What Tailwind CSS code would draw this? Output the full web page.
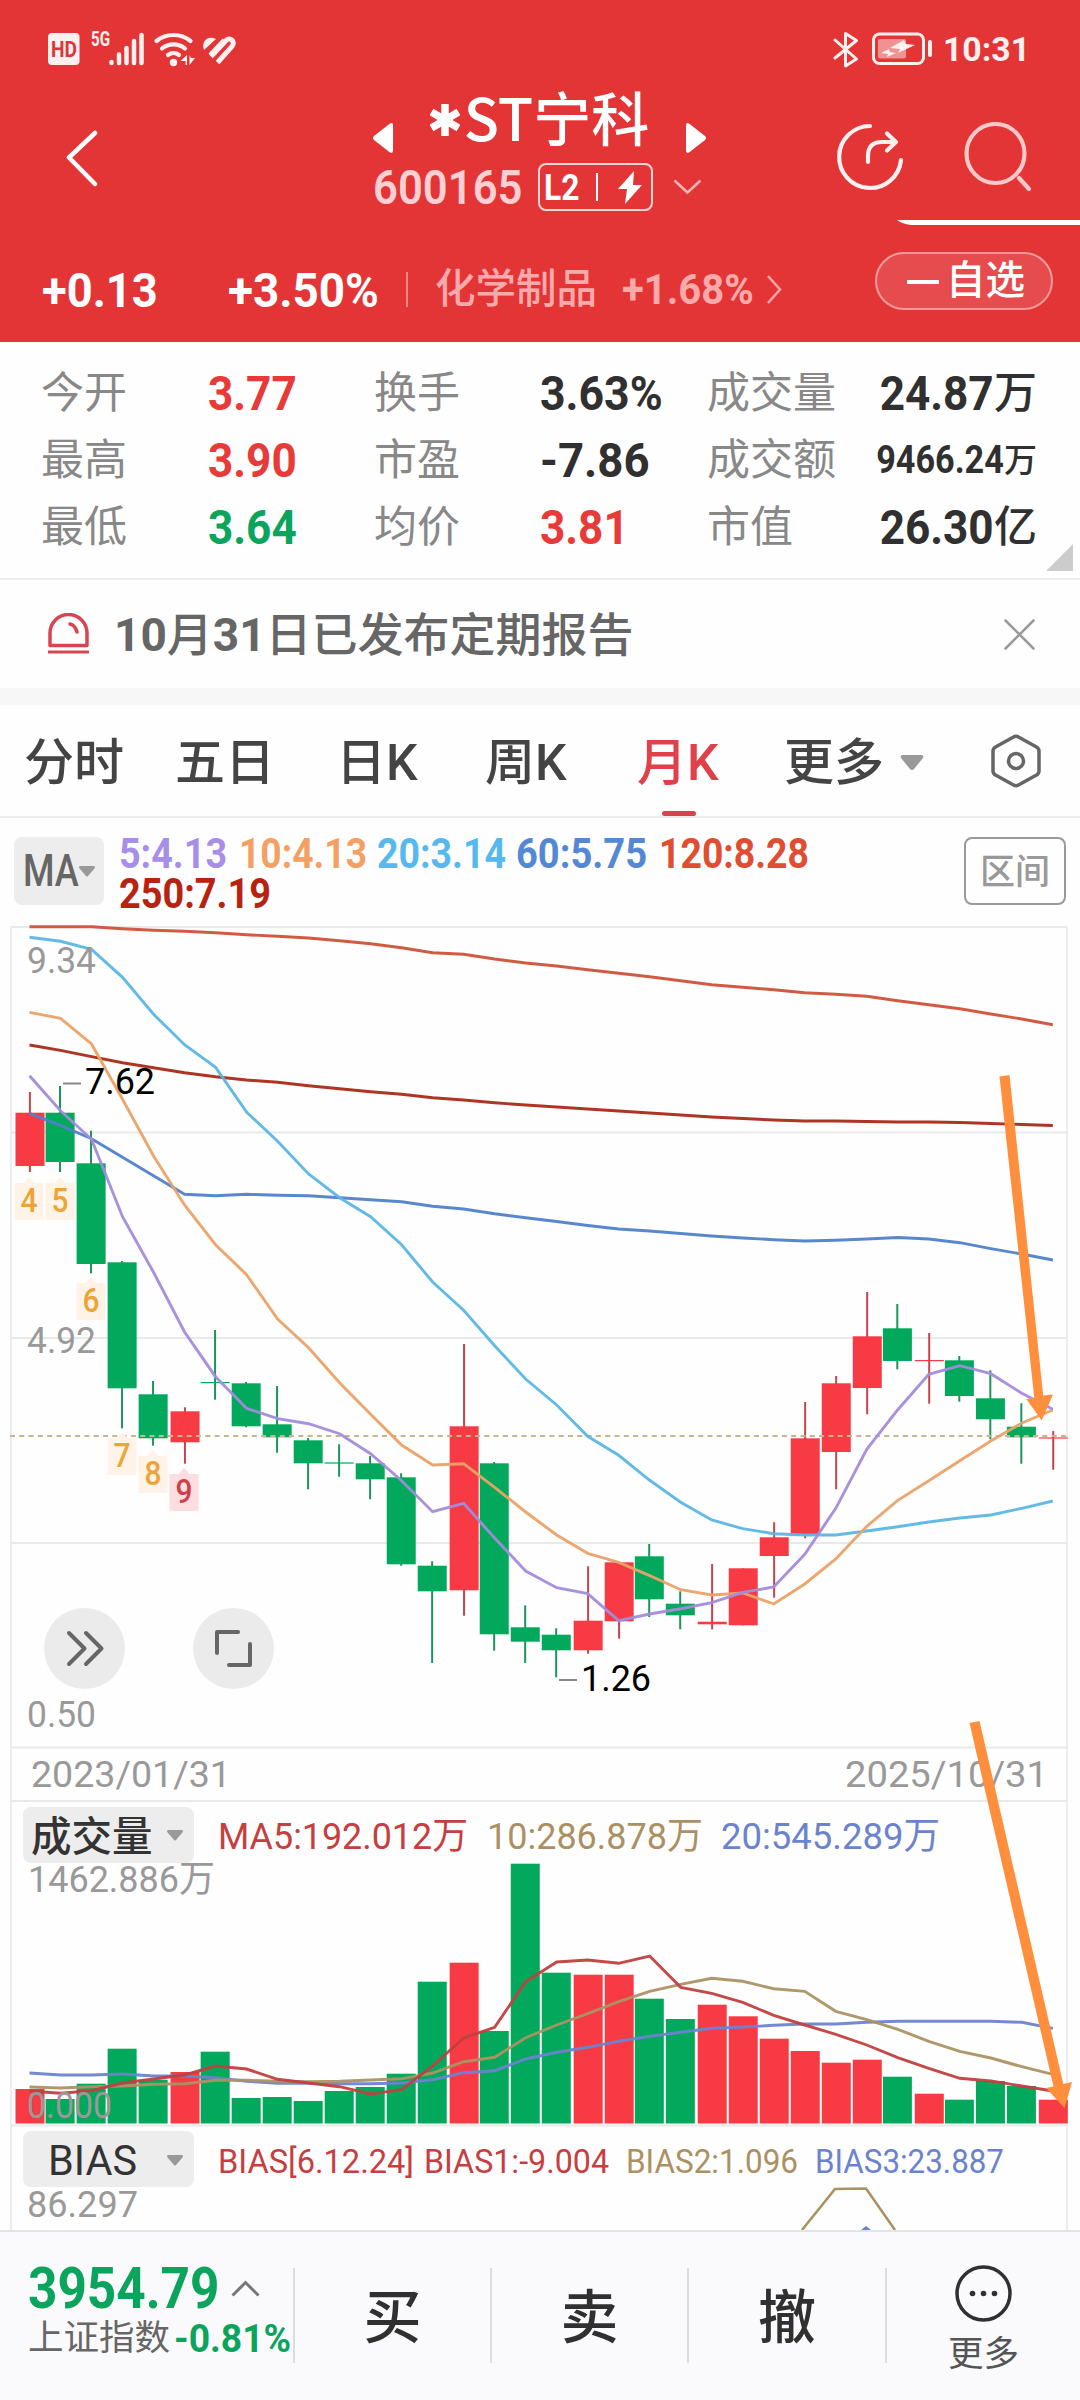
<!DOCTYPE html>
<html lang="zh-CN">
  <head>
    <meta charset="UTF-8" />
    <meta name="viewport" content="width=device-width, initial-scale=1.0" />
    <title>*ST宁科 600165</title>
    <script src="https://cdn.jsdelivr.net/npm/@tailwindcss/browser@4"></script>
  </head>
  <body
    class="w-[1080px] h-[2400px] flex flex-col overflow-hidden bg-[#fefefe] font-[Roboto,'Noto_Sans_CJK_SC',sans-serif] leading-none whitespace-nowrap"
  >
    <!-- header -->
    <header class="relative h-[342px] shrink-0 bg-[#e33536] text-white">
      <!-- status bar -->
      <div class="h-[98px] pl-12 pr-[52px] flex items-center justify-between">
        <svg class="overflow-visible" width="190" height="40" viewBox="48 29 190 40" fill="#fff0f0">
          <rect x="48" y="33" width="31.500" height="32" rx="4" />
          <text x="51" y="57" font-size="22" font-weight="700" fill="#d9393b" textLength="26" lengthAdjust="spacingAndGlyphs">HD</text>
          <text x="91" y="46" font-size="20" font-weight="700" textLength="19" lengthAdjust="spacingAndGlyphs">5G</text>
          <g stroke="#fff0f0" stroke-width="4.500" stroke-linecap="round">
            <path d="M111.500 62v1M119 54.500v8.500M126.500 48v15M134 41v22M141.500 35v28" />
          </g>
          <g fill="none" stroke="#fff0f0" stroke-width="4.200" stroke-linecap="round">
            <path d="M156.500 41a27 27 0 0 1 34 0M162 48.500a18 18 0 0 1 23 0M168 55a9 9 0 0 1 11 0" />
          </g>
          <circle cx="173.500" cy="62.500" r="3.700" />
          <path d="M187 55v10h-1.500v-4h-5zM189.500 55v10l5.500-7h-4z" />
          <g fill="none" stroke="#fff0f0" stroke-width="5">
            <path d="M211 56.500l15-16c4-4 10 1 6 6l-14.500 16" />
          </g>
          <path d="M204 50c-3-8 3-15 12-11zM208.500 53.500l14-15 4 1.500-14.500 17z" />
        </svg>
        <svg class="overflow-visible" width="195" height="40" viewBox="833 29 195 40" fill="none">
          <path d="M835 40l21.500 19-11 7V33.500l11 7L835 58" stroke="#fff0f0" stroke-width="3" stroke-linejoin="round" stroke-linecap="round" />
          <rect x="873.500" y="34" width="50" height="29.500" rx="6" stroke="#fff0f0" stroke-width="3" />
          <rect x="878" y="39" width="28" height="19.500" rx="2" fill="#f19292" />
          <path d="M930 42v13" stroke="#fff0f0" stroke-width="4" stroke-linecap="round" />
          <path d="M904 40l-14 8 10 1-2 4 17-8-9-1zM889 49l-8 4 7 1-1 3 9-4-6-1z" fill="#fff0f0" />
          <text x="943" y="61" font-size="34" font-weight="700" fill="#fff0f0" textLength="87" lengthAdjust="spacingAndGlyphs">10:31</text>
        </svg>
      </div>

      <!-- title row -->
      <div class="h-[127px] flex">
        <svg class="mt-[31px] ml-[66px] shrink-0" width="32" height="58" viewBox="0 0 32 58" fill="none" stroke="#fff" stroke-width="4.500" stroke-linecap="round" stroke-linejoin="round">
          <path d="M29 4 3 28.500 29 55" />
        </svg>
        <div class="ml-[275px] w-[334px] shrink-0">
          <div class="flex items-center h-[64px] -mt-3">
            <svg class="mt-[40px] shrink-0" width="20" height="30" viewBox="0 0 20 30" fill="#fff"><path d="M17 .5q3-1.500 3 2v25q0 3.500-3 2L1 17q-2-2 0-4z" /></svg>
            <div class="w-[293px] -mt-1 text-center text-[58px] font-medium font-['Noto_Sans_CJK_SC',sans-serif] flex justify-center items-center">
              <svg class="mt-2 mr-1" width="30" height="32" viewBox="0 0 30 32" stroke="#fff" stroke-width="7.500"><path d="M15 0v32M1.500 8l27 16M28.500 8l-27 16" /></svg>
              <span>ST宁科</span>
            </div>
            <svg class="mt-[40px] shrink-0" width="20" height="30" viewBox="0 0 20 30" fill="#fff"><path d="M3 .5Q0-1 0 2.500v25Q0 31 3 29.500L19 17q2-2 0-4z" /></svg>
          </div>
          <div class="flex items-center mt-[13px] h-[48px]">
            <span class="w-[165px] text-[49px] font-semibold text-[#fcd0d2]"><span class="inline-block origin-left scale-x-[0.89]">600165</span></span>
            <div class="w-[115px] h-[48px] border-2 border-white/80 rounded-lg flex items-center shrink-0 pl-1 text-[37px] font-bold">
              <span class="w-[40px]"><span class="inline-block origin-left scale-x-[0.86]">L2</span></span>
              <i class="w-0.5 h-7 bg-white ml-3"></i>
              <svg class="ml-[20px]" width="24" height="33" viewBox="0 0 24 33" fill="#fff"><path d="M16 0 0 18h9L7 33 24 14h-9z" /></svg>
            </div>
            <svg class="ml-5 shrink-0" width="29" height="16" viewBox="0 0 29 16" fill="none" stroke="#f6b5b6" stroke-width="2.500"><path d="M1.500 1.500l13 12 13-12" /></svg>
          </div>
        </div>
        <svg class="mt-[25px] ml-[129px] shrink-0" width="68" height="68" viewBox="836 123 68 68" fill="none" stroke="#fff0f0" stroke-width="4.200" stroke-linecap="round" stroke-linejoin="round">
          <path d="M870 126a31 31 0 1 0 31 34M868 162v-6q0-14 14-14h13M887 133.500l9 8.500-9 8.500" />
        </svg>
        <svg class="mt-[24px] ml-[60px] shrink-0" width="68" height="70" viewBox="964 122 68 70" fill="none" stroke="#fbc9ca" stroke-width="4.200" stroke-linecap="round">
          <ellipse cx="995.500" cy="153.500" rx="29" ry="29.500" />
          <path d="M1019 178l10 11" />
        </svg>
      </div>
      <svg class="absolute right-0 top-[220px]" width="183" height="6" viewBox="0 0 183 6" fill="#fff"><path d="M0 0h183v5H14Q5 4 0 0z" /></svg>

      <!-- change row -->
      <div class="h-[117px] pl-[42px] flex items-center pb-[1px] text-[49px] font-bold">
        <span class="w-[186px] mt-[14px]"><span class="inline-block origin-left scale-x-[0.925]">+0.13</span></span>
        <span class="w-[178px] mt-[14px]"><span class="inline-block origin-left scale-x-[0.935]">+3.50%</span></span>
        <i class="w-0.5 h-[35px] bg-[#f08485] mt-3"></i>
        <span class="ml-[27px] w-[187px] mt-[13px] text-[40.500px] font-medium text-[#fbaaab]">化学制品</span>
        <span class="w-[144px] mt-[13px] text-[43px] text-[#fbaaab]"><span class="inline-block origin-left scale-x-[0.93]">+1.68%</span></span>
        <svg class="mt-[13px]" width="17" height="29" viewBox="0 0 17 29" fill="none" stroke="#fbaaab" stroke-width="2.500"><path d="M2 1l12 13.500L2 28" /></svg>
        <div class="ml-[92px] -mt-1 w-[178px] h-[58px] shrink-0 rounded-full border-2 border-[#f19a9b] bg-[#e64c4d] flex items-center pl-[30px] text-[39.500px] font-medium">
          <i class="w-8 h-1 bg-white mr-[7px] mt-0.5"></i>自选
        </div>
      </div>
    </header>

    <!-- quote grid -->
    <section class="relative h-[238px] shrink-0 border-b-2 border-[#ececec] pt-[17.500px] pl-[41px]">
      <div class="grid grid-cols-[167px_166px_166px_167px_128px_202px] auto-rows-[67.3px] items-center text-[49px] font-bold text-[#303030]">
        <span class="text-[43px] font-normal text-[#888]">今开</span>
        <span class="origin-left scale-x-[0.9] text-[#e83a38]">3.77</span>
        <span class="text-[43px] font-normal text-[#888]">换手</span>
        <span class="origin-left scale-x-[0.91]">3.63%</span>
        <span class="text-[43px] font-normal text-[#888]">成交量</span>
        <span class="flex items-center justify-end"><span class="origin-right scale-x-[0.9]">24.87</span><span class="text-[43px] font-medium">万</span></span>

        <span class="text-[43px] font-normal text-[#888]">最高</span>
        <span class="origin-left scale-x-[0.9] text-[#e83a38]">3.90</span>
        <span class="text-[43px] font-normal text-[#888]">市盈</span>
        <span class="origin-left scale-x-[0.93]">-7.86</span>
        <span class="text-[43px] font-normal text-[#888]">成交额</span>
        <span class="flex items-center justify-end text-[38px]"><span class="origin-right scale-x-[0.9]">9466.24</span><span class="text-[33px] font-medium">万</span></span>

        <span class="text-[43px] font-normal text-[#888]">最低</span>
        <span class="origin-left scale-x-[0.9] text-[#0ba45d]">3.64</span>
        <span class="text-[43px] font-normal text-[#888]">均价</span>
        <span class="origin-left scale-x-[0.9] text-[#e83a38]">3.81</span>
        <span class="text-[43px] font-normal text-[#888]">市值</span>
        <span class="flex items-center justify-end"><span class="origin-right scale-x-[0.9]">26.30</span><span class="text-[43px] font-medium">亿</span></span>
      </div>
      <svg class="absolute left-[1046px] top-[202px]" width="27" height="27" fill="#ccc"><path d="M27 0v27H0z" /></svg>
    </section>

    <!-- notice -->
    <section class="h-[108px] shrink-0 flex items-center pl-12 pr-[45px]">
      <svg width="41" height="42" viewBox="0 0 41 42" fill="none" stroke="#d64550" stroke-width="3.500">
        <path d="M2 32.500V20a18.500 18.500 0 0 1 37 0v12.500z" stroke-linejoin="round" />
        <path d="M22 11q5 1 7 8" stroke-linecap="round" />
        <path d="M0 39h41" stroke-width="3" />
      </svg>
      <span class="ml-[25px] mt-0.5 text-[46px] font-medium text-[#666]"><b>10</b>月<b>31</b>日已发布定期报告</span>
      <svg class="ml-auto" width="31" height="31" viewBox="0 0 31 31" stroke="#999" stroke-width="2.500" stroke-linecap="round"><path d="M1.500 1.500l28 28M29.500 1.500l-28 28" /></svg>
    </section>
    <div class="h-[17px] shrink-0 bg-[#f7f7f7]"></div>

    <!-- period tabs -->
    <nav class="h-[113px] shrink-0 border-b-2 border-[#ececec] pl-[24px] flex items-center text-[50px] font-medium text-[#444]">
      <span class="w-[151px] mt-1">分时</span>
      <span class="w-[161px] mt-1">五日</span>
      <span class="w-[149px] mt-1">日K</span>
      <span class="w-[152px] mt-1">周K</span>
      <span class="w-[147px] h-full flex items-center relative pt-1 text-[#df414b]">月K<i class="absolute left-[25px] bottom-0 w-[34px] h-[5px] rounded-full bg-[#d6444e]"></i></span>
      <span class="w-[116px] mt-1">更多</span>
      <svg class="mt-1" width="24" height="15" fill="#999"><path d="M2 0h20q2 1 1 3L14 14q-2 2-4 0L1 3q-1-2 1-3z" /></svg>
      <svg class="ml-[67px]" width="50" height="54" viewBox="0 0 50 54" fill="none" stroke="#666" stroke-width="3.500" stroke-linejoin="round">
        <path d="M22.500 3q2.500-1.500 5 0l18 10q2.500 1.500 2.500 4v20q0 2.500-2.500 4l-18 10q-2.500 1.500-5 0l-18-10Q2 39.500 2 37V17q0-2.500 2.500-4z" />
        <circle cx="25" cy="27" r="7.500" />
      </svg>
    </nav>

    <!-- moving average legend -->
    <section class="h-[107px] shrink-0 flex items-start pt-[19px] pl-3.5 pr-[14px]">
      <div class="w-[90px] h-[68px] rounded-lg bg-[#ededed] flex items-center pl-[9px] text-[44px] font-medium text-[#666]">
        <span class="w-[56px]"><span class="inline-block origin-left scale-x-[0.82]">MA</span></span>
        <svg class="shrink-0" width="16" height="11" fill="#999"><path d="M1 0h14q2 1 0 3l-6 7q-1 1-2 0L1 3Q-1 1 1 0z" /></svg>
      </div>
      <svg class="ml-4 overflow-visible" width="700" height="80" viewBox="120 837 700 80" font-size="43" font-weight="700">
        <text x="119" y="867.500" fill="#a78ee8" textLength="108" lengthAdjust="spacingAndGlyphs">5:4.13</text>
        <text x="239" y="867.500" fill="#f3a062" textLength="128" lengthAdjust="spacingAndGlyphs">10:4.13</text>
        <text x="377" y="867.500" fill="#56b9ee" textLength="129" lengthAdjust="spacingAndGlyphs">20:3.14</text>
        <text x="516" y="867.500" fill="#5488d4" textLength="131" lengthAdjust="spacingAndGlyphs">60:5.75</text>
        <text x="659" y="867.500" fill="#e04d31" textLength="150" lengthAdjust="spacingAndGlyphs">120:8.28</text>
        <text x="119" y="907.500" fill="#b72310" textLength="152" lengthAdjust="spacingAndGlyphs">250:7.19</text>
      </svg>
      <div class="ml-auto w-[102px] h-[68px] rounded-lg border-2 border-[#999] flex items-center justify-center pt-0.5 text-[35px] font-medium text-[#999]">区间</div>
    </section>

    <!-- charts -->
    <svg id="chart" class="shrink-0" width="1080" height="1305" viewBox="0 925 1080 1305" fill="none"></svg>

    <!-- bottom bar -->
    <footer class="h-[170px] shrink-0 border-t-2 border-[#e4e4e6] bg-[#fafafc] flex pt-9 text-[58px] font-medium text-[#303030]">
      <div class="w-[293px] shrink-0 pl-7">
        <div class="h-[41px] flex items-center text-[57px] font-bold text-[#0ba45d]">
          <span class="w-[203px]"><span class="inline-block origin-left scale-x-[0.9]">3954.79</span></span>
          <svg width="29" height="17" viewBox="0 0 29 17" fill="none" stroke="#777" stroke-width="3"><path d="M1.500 15.500l13-13 13 13" /></svg>
        </div>
        <div class="h-[36px] mt-3 flex items-center">
          <span class="w-[153px] text-[35.500px] font-normal text-[#666]">上证指数</span>
          <span class="text-[38px] font-bold text-[#0ba45d] origin-left scale-x-[0.98]">-0.81%</span>
        </div>
      </div>
      <div class="w-[197px] h-[95px] shrink-0 border-l-2 border-[#dcdcde] flex items-center justify-center pt-1">买</div>
      <div class="w-[197px] h-[95px] shrink-0 border-l-2 border-[#dcdcde] flex items-center justify-center pt-1">卖</div>
      <div class="w-[198px] h-[95px] shrink-0 border-l-2 border-[#dcdcde] flex items-center justify-center pt-1">撤</div>
      <div class="w-[195px] h-[95px] shrink-0 border-l-2 border-[#dcdcde] flex flex-col items-center">
        <svg class="-mt-[3px] shrink-0" width="57" height="57" viewBox="0 0 57 57" fill="#303030">
          <circle cx="28.500" cy="28.500" r="26.500" fill="none" stroke="#303030" stroke-width="3.500" />
          <circle cx="17.500" cy="28.500" r="2.800" /><circle cx="28.500" cy="28.500" r="2.800" /><circle cx="39.500" cy="28.500" r="2.800" />
        </svg>
        <span class="mt-[15px] text-[35.500px] font-normal text-[#555]">更多</span>
      </div>
    </footer>

    <script>
      const RED = "#f73a43";
      const GREEN = "#02a95c";
      const cx = (i) => 29.5 + i * 31.01;

      // [up, body top, body bottom, wick top, wick bottom, volume top]
      const candles = [
        [1, 1112.7, 1166, 1092, 1172, 2089],
        [0, 1112.7, 1162, 1086, 1172, 2099],
        [0, 1163.3, 1264, 1130.7, 1273.3, 2083.7],
        [0, 1262.3, 1388.3, 1261, 1428.3, 2048.7],
        [0, 1394.3, 1438.3, 1381, 1445.7, 2079.7],
        [1, 1411.3, 1442.3, 1407.3, 1463.7, 2072],
        [0, 1382, 1383.2, 1330, 1399.7, 2051.7],
        [0, 1383.3, 1426.3, 1382, 1427.3, 2098],
        [0, 1424.3, 1437.3, 1386, 1452.7, 2097],
        [0, 1440.3, 1463.3, 1438, 1489.3, 2101],
        [0, 1462.4, 1463.6, 1444.3, 1476.7, 2091],
        [0, 1463.3, 1479.3, 1456, 1499.3, 2087],
        [0, 1477.3, 1564.3, 1473.3, 1565.7, 2073.7],
        [0, 1565.7, 1591.3, 1561.3, 1663, 1981.7],
        [1, 1426.3, 1590.3, 1344, 1615.7, 1962.7],
        [0, 1463.3, 1634.3, 1462, 1650.7, 2031],
        [0, 1627.3, 1641.7, 1605.3, 1663, 1863.7],
        [0, 1634.7, 1650.3, 1628.3, 1677.3, 1972.7],
        [1, 1620.7, 1650.3, 1566.3, 1653.7, 1974.7],
        [1, 1562.3, 1621.3, 1562.3, 1638.7, 1974.7],
        [0, 1556.3, 1599.3, 1544, 1617, 1998.7],
        [0, 1603.7, 1615.3, 1591.3, 1629.3, 2019],
        [1, 1621.7, 1624.3, 1564, 1629.3, 2004.7],
        [1, 1568.3, 1625.3, 1568.3, 1625.3, 2016.3],
        [1, 1537.3, 1556, 1522.3, 1597.7, 2038.7],
        [1, 1438.3, 1534.3, 1402, 1538.3, 2051],
        [1, 1383.3, 1452, 1376, 1489.3, 2062.7],
        [1, 1336.3, 1388, 1292, 1414.3, 2059.7],
        [0, 1328.3, 1361, 1304, 1369.3, 2076.7],
        [1, 1360, 1361.2, 1333, 1403.7, 2093.7],
        [0, 1360.3, 1396, 1356, 1401.7, 2099.7],
        [0, 1398.3, 1419.3, 1370.3, 1439.3, 2081],
        [0, 1426.7, 1437.3, 1403.3, 1463.7, 2086],
        [1, 1437.4, 1438.6, 1431, 1469.7, 2099.7],
      ];

      const priceLines = {
        "#cf5238": [926.7, 926.7, 926.7, 928.7, 930.3, 931.3, 932.7, 934.7, 936.3, 938, 940.7, 943.7, 947.7, 952.7, 954.3, 959, 963, 966, 969.7, 973.3, 976.7, 980.7, 984.7, 987.3, 989.7, 992.7, 994.3, 996.3, 1000.7, 1004.7, 1008.7, 1014, 1019, 1024.7],
        "#a82a17": [1045, 1050.3, 1056.7, 1062.7, 1067.7, 1072.7, 1076.7, 1080, 1082.3, 1085.7, 1088.7, 1091.7, 1094.3, 1097.7, 1100, 1102.7, 1105, 1107, 1109, 1111, 1113, 1115, 1117, 1118.5, 1120, 1121, 1121, 1121.5, 1122, 1122, 1122.5, 1123.5, 1124.5, 1125.5],
        "#4f81cb": [1113.3, 1125.3, 1138.7, 1157.3, 1175.7, 1194.3, 1195.7, 1194.3, 1195.3, 1195.7, 1197.7, 1199.7, 1201.7, 1206.3, 1209, 1213.7, 1217.7, 1221.5, 1225.5, 1229, 1231, 1233.5, 1236, 1238, 1239.7, 1241, 1240.3, 1239, 1237.5, 1239, 1242.7, 1248.7, 1254, 1260],
        "#5ab6e4": [937.3, 941.3, 949.3, 977.3, 1014.3, 1044.7, 1067.3, 1112, 1141.3, 1174, 1197.7, 1216.7, 1244.7, 1282, 1310.3, 1345.7, 1379, 1405, 1436.3, 1455.3, 1480.3, 1502.3, 1520, 1528.7, 1533.7, 1535, 1535, 1531, 1526.7, 1522, 1518, 1515, 1508.3, 1501],
        "#eaa267": [1012.3, 1018.3, 1044, 1099.3, 1156, 1205, 1244.7, 1274.7, 1319, 1347.7, 1382.7, 1414.3, 1445, 1465, 1463.7, 1487.3, 1512, 1535, 1553.3, 1562.3, 1575.7, 1589.7, 1595, 1593, 1604, 1584, 1559, 1526.3, 1500.3, 1480.7, 1460.7, 1441, 1423, 1410],
        "#a38bdb": [1075.7, 1110.7, 1139.3, 1216.7, 1272.3, 1332, 1376.7, 1408.3, 1418.7, 1423.7, 1433.7, 1453.7, 1480.7, 1511.7, 1503.3, 1538, 1571, 1587.7, 1593.7, 1620.7, 1614, 1608.7, 1602.7, 1592.3, 1587, 1554.3, 1508.3, 1449.3, 1409.7, 1374.3, 1365.7, 1373.7, 1393.3, 1409.3],
      };

      const volumeLines = {
        "#6b83cf": [2073, 2075, 2075, 2074, 2076, 2076, 2077.7, 2081.3, 2083.3, 2083.3, 2083.7, 2083.7, 2083, 2079.7, 2072.7, 2070.7, 2059, 2052.3, 2047.3, 2041.3, 2036.3, 2032.3, 2028.3, 2027, 2025.3, 2024, 2024, 2022.3, 2021.3, 2021.3, 2021.3, 2021.3, 2022.3, 2028.3],
        "#ab9263": [2087, 2088, 2086.7, 2086, 2084.3, 2083.7, 2080.3, 2080.3, 2081.3, 2081.7, 2081.3, 2080, 2078.7, 2073, 2061.7, 2057.3, 2037.7, 2025, 2013.7, 2001.7, 1991.3, 1984.3, 1978.3, 1981.3, 1988.7, 1991.3, 2011.3, 2019.7, 2029.3, 2041.3, 2051.3, 2058, 2066.7, 2074.3],
        "#c13f3f": [2091, 2093.3, 2090.7, 2083, 2079, 2075, 2066, 2069, 2079.3, 2083, 2086.7, 2094, 2089.7, 2066, 2038, 2027.3, 1981.7, 1962, 1960, 1963.3, 1956, 1987.3, 1993.3, 2002.3, 2015.3, 2025, 2034.3, 2045, 2057.7, 2068.3, 2078.3, 2081, 2086, 2091],
      };

      // [candle index, label, box top]
      const signals = [[0, 4, 1183], [1, 5, 1183], [2, 6, 1283], [3, 7, 1438], [4, 8, 1456], [5, 9, 1474]];

      // [text, x, baseline, width, size, colour, weight]
      const labels = [
        ["9.34", 27, 973, 69, 37, "#999", 400],
        ["4.92", 27, 1352.7, 69, 37, "#999", 400],
        ["0.50", 27, 1727, 69, 37, "#999", 400],
        ["2023/01/31", 31, 1787, 200, 37, "#999", 400],
        ["2025/10/31", 845, 1787, 203, 37, "#999", 400],
        ["7.62", 85, 1094, 70, 37, "#000", 400],
        ["1.26", 581, 1691, 70, 37, "#000", 400],
        ["MA5:192.012万", 218, 1849, 250, 37, "#c63e40", 400],
        ["10:286.878万", 487, 1849, 216, 37, "#ab9063", 400],
        ["20:545.289万", 721, 1849, 219, 37, "#6b83cf", 400],
        ["1462.886万", 28, 1892, 187, 37, "#999", 400],
        ["0.000", 27, 2118, 85, 37, "#999", 400],
        ["BIAS[6.12.24]", 218, 2173, 196, 33.5, "#c63e40", 400],
        ["BIAS1:-9.004", 424, 2173, 185, 33.5, "#c63e40", 400],
        ["BIAS2:1.096", 626, 2173, 172, 33.5, "#ab9063", 400],
        ["BIAS3:23.887", 815, 2173, 189, 33.5, "#6b83cf", 400],
        ["86.297", 27, 2216.5, 111, 37, "#999", 400],
      ];

      const points = (values) => values.map((y, i) => `${cx(i)},${y}`).join(" ");
      const drawLines = (lines) =>
        Object.entries(lines)
          .map(([color, v]) => `<polyline points="${points(v)}" stroke="${color}" stroke-width="2.9" opacity=".95"/>`)
          .join("");

      let svg = "";

      // frame and grid
      svg += `<path d="M11 927V2230M1067 927V2230" stroke="#ededed" stroke-width="2"/>`;
      [927, 1132.5, 1338, 1543, 1747.5, 1801, 2125.5].forEach((y) => {
        svg += `<path d="M11 ${y}H1067" stroke="#e9e9e9" stroke-width="2"/>`;
      });

      candles.forEach(([up, top, bottom, high, low, vol], i) => {
        const fill = up ? RED : GREEN;
        const mid = cx(i) + (up ? 0.4 : -0.5);
        const x = mid - 14.4;
        svg += `<path d="M${mid} ${high}V${low}" stroke="${up ? "#c9434b" : "#1a965c"}" stroke-width="2"/>`;
        svg += `<rect x="${x}" y="${top}" width="29" height="${bottom - top}" fill="${fill}"/>`;
        svg += `<rect x="${x}" y="${vol}" width="29" height="${2123.5 - vol}" fill="${fill}"/>`;
      });

      svg += `<path d="M10 1436H1067" stroke="#c9b48c" stroke-width="2" stroke-dasharray="5 4.3"/>`;
      svg += drawLines(priceLines) + drawLines(volumeLines);

      signals.forEach(([i, n, y]) => {
        const hot = n === 9;
        const x = cx(i) - 15;
        svg += `<path d="M${x} ${y}h9l5.5-6 5.500 6h9v37h-29z" fill="${hot ? "#fddde0" : "#fef3e6"}"/>`;
        svg += `<text x="${x + 14.5}" y="${y + 28.500}" text-anchor="middle" font-size="33" font-weight="500" fill="${hot ? "#cf3f49" : "#eca436"}" textLength="17" lengthAdjust="spacingAndGlyphs">${n}</text>`;
      });

      // selector buttons
      svg += `<rect x="23" y="1807" width="171" height="56" rx="8" fill="#ededed"/>
        <text x="31" y="1851" font-size="40.500" font-weight="500" fill="#333">成交量</text>
        <path d="M168 1830h14q2 1 0 3l-6 7q-1 1-2 0l-6-7q-2-2 0-3z" fill="#999"/>
        <rect x="23" y="2131" width="171" height="56" rx="8" fill="#ededed"/>
        <text x="48" y="2174.500" font-size="42" fill="#333" textLength="89" lengthAdjust="spacingAndGlyphs">BIAS</text>
        <path d="M168 2155h14q2 1 0 3l-6 7q-1 1-2 0l-6-7q-2-2 0-3z" fill="#999"/>`;

      labels.forEach(([t, x, y, w, size, color, weight]) => {
        svg += `<text x="${x}" y="${y}" font-size="${size}" font-weight="${weight}" fill="${color}" textLength="${w}" lengthAdjust="spacingAndGlyphs">${t}</text>`;
      });
      svg += `<path d="M63 1083.500h18M559 1680h18" stroke="#888" stroke-width="2"/>`;

      // bias curve
      svg += `<path d="M802 2230l33-41 31-.5 29 41.500" stroke="#ab9263" stroke-width="2.600"/>
        <path d="M861 2230l5-4 5 4z" fill="#6b83cf"/>`;

      // round buttons
      svg += `<circle cx="84.500" cy="1648.500" r="40.500" fill="#ebebeb"/><circle cx="233.500" cy="1648.500" r="40.500" fill="#ebebeb"/>
        <path d="M69 1633l15.500 15.500L69 1664M86 1633l15.500 15.500L86 1664M238 1632h-21v21M250 1644v21h-21" stroke="#666" stroke-width="4" stroke-linecap="round" stroke-linejoin="round"/>`;

      // arrows
      svg += `<path d="M999.500 1076.500l10-1.500 33.700 320.500 9.800-1-11.300 26-15.400-21.500 8-1z" fill="#ff8f3c"/>
        <path d="M969.500 1723l10-2 83.800 363 8.700-2-7.500 26-18.500-20 7.500-1.500z" fill="#ff8f3c"/>`;

      document.getElementById("chart").innerHTML = svg;
    </script>
  </body>
</html>
